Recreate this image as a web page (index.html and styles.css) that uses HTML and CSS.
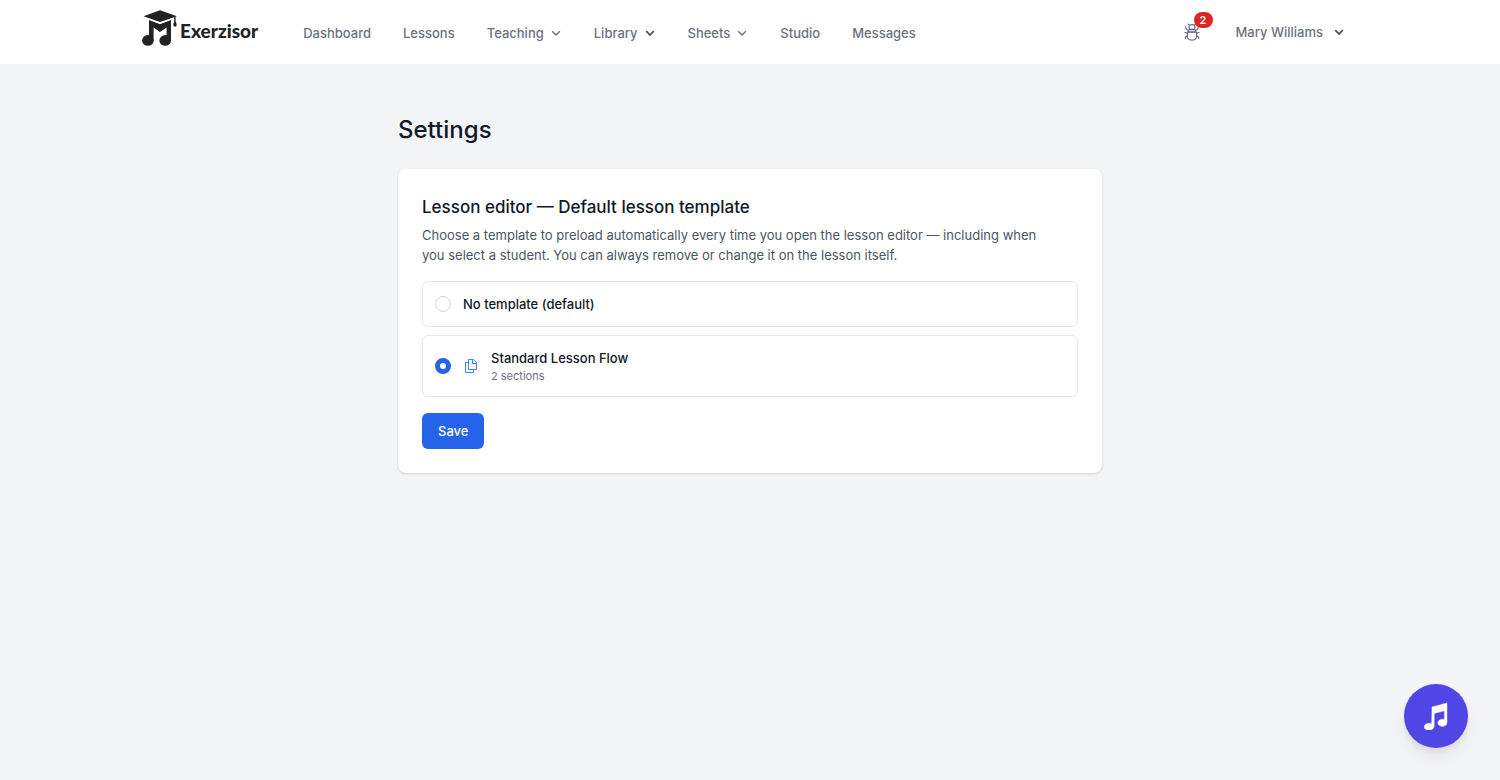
FILE: index.html
```
<!DOCTYPE html>
<html lang="en">
<head>
    <meta charset="UTF-8">
    <meta name="viewport" content="width=device-width, initial-scale=1.0">
    <title>Settings - Exerzisor</title>
    <link rel="stylesheet" href="styles.css">
</head>
<body>

<header class="topbar">
    <div class="topbar-inner">
        <a href="#" class="logo">
            <svg class="logo-mark" viewBox="0 0 36 36" fill="#222" aria-hidden="true">
                <path d="M18 0.2 L35 6.2 L18 12 L1.5 6.2 Z"/>
                <path d="M32.2 7 L33.6 7 L33.6 11.5 Q35.4 14 34.2 16.5 L31.8 16.5 Q30.6 14 32.2 11.5 Z"/>
                <path d="M7 10 L18 14 L29 10 L29 30.5 L24.6 30.5 L24.6 17.5 L18 22 L11.6 17.5 L11.6 30.5 L7 30.5 Z"/>
                <ellipse cx="5.9" cy="30.4" rx="5.8" ry="5.3"/>
                <ellipse cx="23.2" cy="30.4" rx="5.8" ry="5.3"/>
                <path d="M8 9.6 L18 13.6 L28 9.6" fill="none" stroke="#fff" stroke-width="1"/>
            </svg>
            <span class="logo-text">Exerzisor</span>
        </a>

        <nav class="menu">
            <a href="#">Dashboard</a>
            <a href="#">Lessons</a>
            <button type="button">Teaching <svg class="chevron" viewBox="0 0 12 12"><path d="M2.2 4.2 L6 8 L9.8 4.2"/></svg></button>
            <button type="button">Library <svg class="chevron bold" viewBox="0 0 12 12"><path d="M2.2 4.2 L6 8 L9.8 4.2"/></svg></button>
            <button type="button">Sheets <svg class="chevron" viewBox="0 0 12 12"><path d="M2.2 4.2 L6 8 L9.8 4.2"/></svg></button>
            <a href="#">Studio</a>
            <a href="#">Messages</a>
        </nav>

        <div class="account">
            <button type="button" class="bug" aria-label="Bug reports">
                <svg viewBox="0 0 16 18" aria-hidden="true">
                    <ellipse cx="8" cy="4.2" rx="3" ry="2.6"/>
                    <path d="M5 6.6 Q8 5.6 11 6.6 L11.8 9 H4.2 Z"/>
                    <path d="M3.6 9.2 H12.4 Q14 17.2 8 17.2 Q2 17.2 3.6 9.2 Z"/>
                    <path d="M5.6 2.2 L3.8 0.8 M10.4 2.2 L12.2 0.8 M4.8 7.4 Q1.4 7 1.8 3.4 M11.2 7.4 Q14.6 7 14.2 3.4 M3.6 10.2 L0.6 9.4 M12.4 10.2 L15.4 9.4 M3.6 12.8 Q1.2 13 1.2 16 M12.4 12.8 Q14.8 13 14.8 16"/>
                </svg>
                <span class="badge">2</span>
            </button>
            <button type="button" class="user">Mary Williams <svg class="chevron bold" viewBox="0 0 12 12"><path d="M2.2 4.2 L6 8 L9.8 4.2"/></svg></button>
        </div>
    </div>
</header>

<main class="page">
    <h1>Settings</h1>

    <form class="card">
        <h2 id="template-title">Lesson editor — Default lesson template</h2>
        <p class="intro">Choose a template to preload automatically every time you open the lesson editor — including when you select a student. You can always remove or change it on the lesson itself.</p>

        <div class="options" role="radiogroup" aria-labelledby="template-title">
            <label class="option">
                <input type="radio" name="template" value="none">
                <span class="option-name">No template (default)</span>
            </label>
            <label class="option">
                <input type="radio" name="template" value="standard" checked>
                <svg class="copy" viewBox="0 0 16 16" aria-hidden="true">
                    <path d="M5.5 1.5 H10.5 L13.5 4.5 V11.5 H5.5 Z M9.5 1.5 V5.5 H13.5"/>
                    <path d="M5.5 4.5 H2.5 V14.5 H10.5 V11.5"/>
                </svg>
                <span class="option-body">
                    <span class="option-name">Standard Lesson Flow</span>
                    <span class="option-meta">2 sections</span>
                </span>
            </label>
        </div>

        <button type="button" class="save">Save</button>
    </form>
</main>

<button type="button" class="fab" aria-label="Music tools">
    <svg viewBox="0 0 24 28" aria-hidden="true">
        <path d="M8 5 L23 1 V20 H20.4 V8.8 L10.2 11.4 V24.5 H7.6 Z"/>
        <ellipse cx="5" cy="24.8" rx="4.8" ry="3.6"/>
        <ellipse cx="18.4" cy="20.8" rx="4.6" ry="3.6"/>
    </svg>
</button>

</body>
</html>
```
FILE: styles.css
```
* {
    box-sizing: border-box;
}
body {
    margin: 0;
    min-height: 100vh;
    background-color: #f3f4f6;
    color: #111827;
    font-family: Inter, "Liberation Sans", sans-serif;
    font-size: 13px;
    line-height: 20px;
}
button {
    padding: 0;
    border: none;
    background: none;
    color: inherit;
    font: inherit;
    cursor: pointer;
}
a {
    color: inherit;
    text-decoration: none;
}
h1, h2, p {
    margin: 0;
}

/* top bar */
.topbar {
    background-color: white;
    border-bottom: 1px solid #f3f4f6;
    color: #6b7280;
    font-weight: 500;
}
.topbar-inner {
    display: flex;
    align-items: center;
    max-width: 1280px;
    height: 64px;
    margin: 0 auto;
    padding: 0 32px;
}
.logo {
    display: flex;
    align-items: center;
    gap: 2px;
    padding-bottom: 8px;
    color: #222;
}
.logo-mark {
    width: 36px;
    height: 36px;
}
.logo-text {
    padding-top: 6px;
    font-family: Lato, sans-serif;
    font-size: 19px;
    font-weight: 900;
}
.menu {
    display: flex;
    gap: 32px;
    margin-left: 45px;
    padding-top: 2px;
}
.menu button, .user {
    display: flex;
    align-items: center;
    gap: 6px;
}
.chevron {
    width: 12px;
    height: 12px;
    fill: none;
    stroke: #6b7280;
    stroke-width: 1.5;
}
.chevron.bold {
    stroke: #4b5563;
    stroke-width: 1.8;
}
.account {
    display: flex;
    align-items: center;
    gap: 36px;
    margin-left: auto;
    padding-right: 13px;
}
.user {
    gap: 10px;
}
.bug {
    position: relative;
    display: flex;
}
.bug svg {
    width: 16px;
    height: 18px;
    fill: none;
    stroke: #6b7280;
    stroke-width: 1.2;
}
.badge {
    position: absolute;
    top: -11px;
    left: 10px;
    width: 19px;
    border-radius: 8px;
    background-color: #dc2626;
    color: white;
    font-size: 11px;
    font-weight: 600;
    line-height: 16px;
}

/* settings */
.page {
    max-width: 768px;
    margin: 0 auto;
    padding: 49px 32px;
}
h1 {
    margin-bottom: 23px;
    font-size: 24px;
    font-weight: 500;
    line-height: 32px;
}
.card {
    padding: 24px;
    border-radius: 8px;
    background-color: white;
    box-shadow: 0 1px 3px rgba(0, 0, 0, 0.1), 0 1px 2px rgba(0, 0, 0, 0.06);
}
h2 {
    font-size: 17px;
    font-weight: 500;
    line-height: 28px;
}
.intro {
    max-width: 632px;
    margin-top: 4px;
    color: #4b5563;
}
.options {
    display: flex;
    flex-direction: column;
    gap: 8px;
    margin: 16px 0;
}
.option {
    display: flex;
    align-items: center;
    gap: 12px;
    padding: 12px;
    border: 1px solid #e5e7eb;
    border-radius: 6px;
    cursor: pointer;
}
.option input {
    appearance: none;
    width: 16px;
    height: 16px;
    margin: 0;
    border: 1px solid #d1d5db;
    border-radius: 50%;
    background-color: white;
}
.option input:checked {
    border: 5px solid #2563eb;
}
.copy {
    width: 16px;
    height: 16px;
    fill: none;
    stroke: #3b82f6;
    stroke-linejoin: round;
}
.option-body {
    display: flex;
    flex-direction: column;
}
.option-name {
    font-weight: 500;
}
.option-meta {
    color: #6b7280;
    font-size: 11px;
    line-height: 16px;
}
.save {
    display: block;
    padding: 8px 16px;
    border-radius: 6px;
    background-color: #2563eb;
    color: white;
    font-weight: 500;
}
.save:hover {
    background-color: #1d4ed8;
}

/* floating button */
.fab {
    position: fixed;
    right: 32px;
    bottom: 32px;
    display: flex;
    align-items: center;
    justify-content: center;
    width: 64px;
    height: 64px;
    border-radius: 50%;
    background-color: #4f46e5;
    box-shadow: 0 10px 15px rgba(0, 0, 0, 0.06), 0 4px 6px rgba(0, 0, 0, 0.06);
}
.fab svg {
    width: 24px;
    height: 28px;
    fill: white;
    stroke: white;
    stroke-width: 0.4;
    stroke-linejoin: round;
}
```
